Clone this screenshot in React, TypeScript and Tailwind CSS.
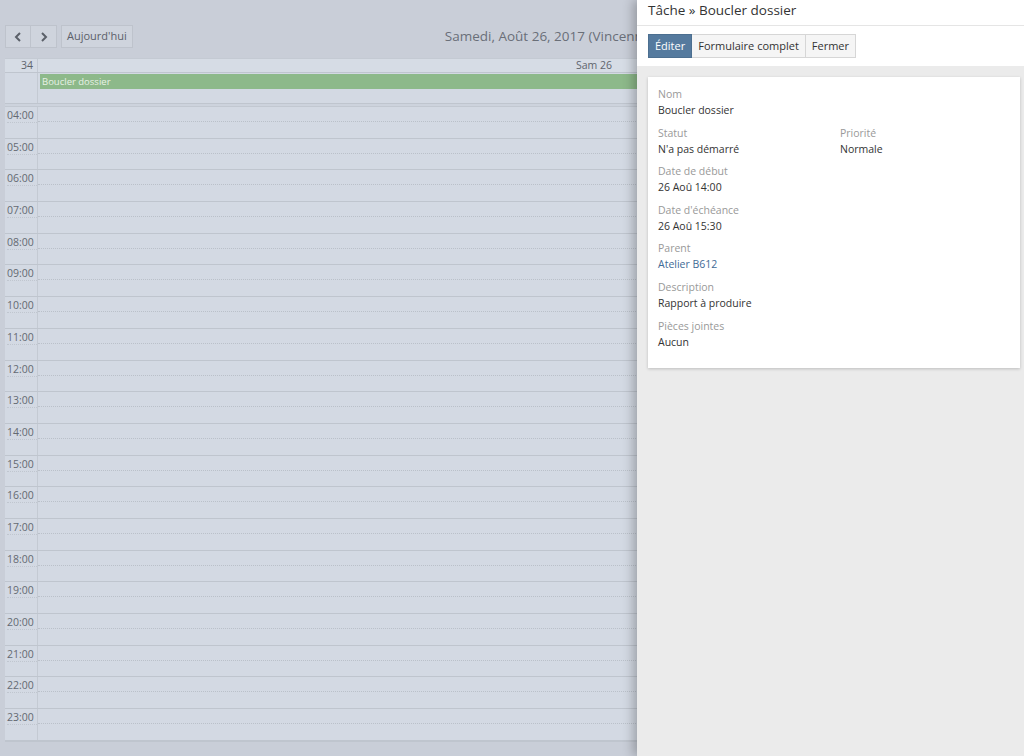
import React from 'react';

const hours = ['04:00','05:00','06:00','07:00','08:00','09:00','10:00','11:00','12:00','13:00','14:00','15:00','16:00','17:00','18:00','19:00','20:00','21:00','22:00','23:00'];

const fields = [
  { label: 'Nom', value: 'Boucler dossier' },
  { label: 'Statut', value: "N'a pas démarré", side: { label: 'Priorité', value: 'Normale' } },
  { label: 'Date de début', value: '26 Aoû 14:00' },
  { label: "Date d'échéance", value: '26 Aoû 15:30' },
  { label: 'Parent', value: 'Atelier B612', link: true },
  { label: 'Description', value: 'Rapport à produire' },
  { label: 'Pièces jointes', value: 'Aucun' },
];

function Chevron({ dir }: { dir: 'left' | 'right' }) {
  return (
    <svg width="8" height="10" viewBox="0 0 8 10" className="text-[#5b6069]">
      <path
        d={dir === 'left' ? 'M6 1 L2 5 L6 9' : 'M2 1 L6 5 L2 9'}
        fill="none"
        stroke="currentColor"
        strokeWidth="2"
      />
    </svg>
  );
}

function Calendar() {
  return (
    <div className="pl-[5px] pt-[25px] w-[1160px]">
      {/* Toolbar */}
      <div className="flex items-center h-[23px]">
        <div className="flex">
          <button className="w-[26px] h-[23px] flex items-center justify-center border border-[#bec3cc] bg-[#cfd4dd]">
            <Chevron dir="left" />
          </button>
          <button className="w-[26px] h-[23px] flex items-center justify-center border border-l-0 border-[#bec3cc] bg-[#cfd4dd]">
            <Chevron dir="right" />
          </button>
        </div>
        <button className="ml-[4px] h-[23px] px-[5px] border border-[#bec3cc] bg-[#cfd4dd] text-[11px] text-[#5b6069]">
          Aujourd'hui
        </button>
        <div className="ml-[312px] text-[13.5px] text-[#6a6f78] whitespace-nowrap">
          Samedi, Août 26, 2017 (Vincennes)
        </div>
      </div>

      {/* Grid */}
      <div className="mt-[10px] bg-[#d3d9e3] border-b border-[#bfc5ce]">
        <div className="flex h-[15px] border-t border-[#c4cad3] border-b border-b-[#bfc5ce] bg-[#d6dce5] text-[10.5px] text-[#5f646d] leading-[13px]">
          <div className="w-[33px] text-right pr-[4px] border-r border-[#c4cad3]">34</div>
          <div className="flex-1 text-center pr-[10px]">Sam 26</div>
        </div>
        <div className="flex h-[31px] border-b border-[#bfc5ce]">
          <div className="w-[33px] border-r border-[#c4cad3]" />
          <div className="flex-1 pl-[2px] pt-[1px]">
            <div className="h-[15px] bg-[#8db98a] text-[9.5px] leading-[15px] text-[#e8f1e6] pl-[2px]">
              Boucler dossier
            </div>
          </div>
        </div>
        <div className="h-[3px] border-b border-[#c2c8d1] bg-[#cdd3dd]" />
        {hours.map((h) => (
          <div key={h} className="flex h-[31.7px] border-b border-[#bfc5ce]">
            <div className="w-[33px] border-r border-[#c4cad3] text-[10.5px] text-[#646972] pl-[2px] pt-[1px] leading-[14px]">
              <div className="h-[15px] border-b border-dotted border-[#c0c6cf]">{h}</div>
            </div>
            <div className="flex-1">
              <div className="h-[15px] border-b border-dotted border-[#bac0c9]" />
            </div>
          </div>
        ))}
      </div>
    </div>
  );
}

function Panel() {
  return (
    <div className="absolute top-0 right-0 w-[387px] h-full bg-[#ebebeb] flex flex-col shadow-[-4px_0_10px_rgba(0,0,0,0.25)]">
      <div className="bg-white h-[26px] border-b border-[#e5e5e5] px-[11px] text-[13.5px] leading-[21px] text-[#333]">
        Tâche » Boucler dossier
      </div>
      <div className="bg-white h-[40px] px-[11px] pt-[8px]">
        <div className="flex h-[24px] text-[11px] leading-[22px]">
          <button className="px-[6px] bg-[#557a9e] text-white border border-[#4c6f90]">Éditer</button>
          <button className="px-[6px] bg-[#f5f5f5] text-[#333] border border-l-0 border-[#d6d6d6]">Formulaire complet</button>
          <button className="px-[6px] bg-[#f5f5f5] text-[#333] border border-l-0 border-[#d6d6d6]">Fermer</button>
        </div>
      </div>
      <div className="px-[11px] pt-[11px]">
        <div className="bg-white shadow-[0_1px_3px_rgba(0,0,0,0.2)] w-[372px] px-[10px] pt-[9px] pb-[18px] flex flex-col gap-[6.6px]">
          {fields.map((f) => (
            <div key={f.label} className="flex">
              <div className="w-[182px]">
                <div className="text-[10.5px] leading-[16px] text-[#999]">{f.label}</div>
                <div className={`text-[10.5px] leading-[16px] ${f.link ? 'text-[#3f6b96]' : 'text-[#333]'}`}>{f.value}</div>
              </div>
              {f.side && (
                <div>
                  <div className="text-[10.5px] leading-[16px] text-[#999]">{f.side.label}</div>
                  <div className="text-[10.5px] leading-[16px] text-[#333]">{f.side.value}</div>
                </div>
              )}
            </div>
          ))}
        </div>
      </div>
    </div>
  );
}

export default function App() {
  return (
    <div
      className="relative w-[1024px] h-[756px] overflow-hidden bg-[#c9ced8]"
      style={{ fontFamily: '"Open Sans", "Noto Sans", sans-serif' }}
    >
      <Calendar />
      <Panel />
    </div>
  );
}
